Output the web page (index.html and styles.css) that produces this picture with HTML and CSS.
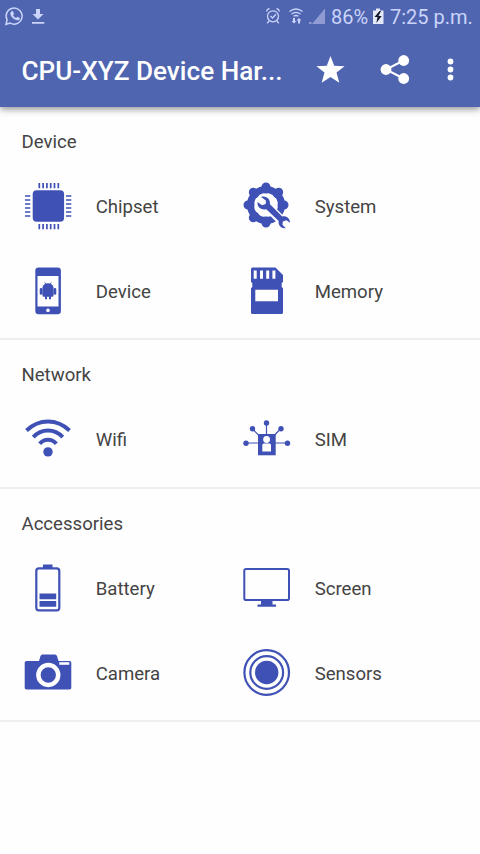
FILE: index.html
```html
<!DOCTYPE html>
<html lang="en">
<head>
<meta charset="utf-8">
<title>CPU-XYZ Device Hardware</title>
<link rel="stylesheet" href="styles.css">
</head>
<body>
<header class="top">
  <div class="status">
    <svg class="status-left" width="60" height="32" viewBox="0 0 60 32">
      <path d="M6 24.300L7.100 20A8 8 0 1 1 10.200 23.100Z" fill="none" stroke="currentColor" stroke-width="1.500"/>
      <path d="M11 11.500l1.800-.4 1.300 2.800-1 1.300c.7 1.300 1.700 2.200 3 2.700l1.200-1.200 2.600 1.300c0 1.800-1.300 2.500-2.700 2.300-3.800-.7-7-4.200-6.900-7z" fill="currentColor"/>
      <path d="M36 9h4v5h3.500L38 19.500 32.500 14H36zM32 22h12.300v1.700H32z" fill="currentColor"/>
    </svg>
    <svg class="status-mid" width="64" height="32" viewBox="264 0 64 32">
      <g fill="none" stroke="currentColor" stroke-width="1.300">
        <circle cx="273" cy="16.300" r="5.500"/>
        <path d="M266.500 11.500q.5-2.500 3-3M279.500 11.500q-.5-2.500-3-3M269 21l-1.800 2.300M277 21l1.800 2.300M270.500 16l2 2 3.500-3.700"/>
        <path d="M289.500 11.500q6.500-5 13 0M291.500 14q4.500-3.300 9 0M293.600 16.300q2.400-1.600 4.800 0"/>
      </g>
      <path d="M293 18h2v3h1.500l-2.500 2.500-2.500-2.500h1.500zM298 23.500h2v-3h1.500L299 18l-2.500 2.500h1.500z" fill="currentColor"/>
      <path d="M325 8.500V24h-13zM309 22h2.500v2H309z" fill="#8f9bd2"/>
    </svg>
    <span class="percent">86%</span>
    <svg class="charge" width="12" height="32" viewBox="372 0 12 32">
      <path d="M373 10.500h3V8.500h4v2h3.500V24H373z" fill="#e4e8fb"/>
      <path d="M379.500 11l-5 6h3l-1.200 6 5.400-7h-3.200l2.500-5z" fill="#151a2a"/>
    </svg>
    <span class="clock">7:25 p.m.</span>
  </div>
  <div class="bar">
    <h1 class="title">CPU-XYZ Device Har...</h1>
    <svg class="actions" width="164" height="40" viewBox="316 50 164 40" fill="#fff">
      <path d="M330.500 56l3.700 9.700 10.400.5-8.100 6.400 2.800 10.200-8.800-5.700-8.800 5.700 2.800-10.200-8.100-6.400 10.400-.5z"/>
      <path d="M403.500 60.500L386 69.500l17.500 9" fill="none" stroke="#fff" stroke-width="2"/>
      <circle cx="403.700" cy="60.500" r="5.400"/><circle cx="386" cy="69.500" r="5.400"/><circle cx="403.700" cy="78.500" r="5.400"/>
      <circle cx="450.500" cy="61.500" r="2.900"/><circle cx="450.500" cy="69.500" r="2.900"/><circle cx="450.500" cy="77.500" r="2.900"/>
    </svg>
  </div>
</header>
<main>
  <section class="section">
    <h2 class="heading">Device</h2>
    <div class="grid">
      <div class="item">
        <svg class="icon" viewBox="0 0 48 48">
          <rect x="8.700" y="8.300" width="31.400" height="31.400" rx="4"/>
          <path d="M15.300 1v5.300M19.100 1v5.300M22.900 1v5.300M26.700 1v5.300M30.500 1v5.300M34.300 1v5.300M15.300 42v5.300M19.100 42v5.300M22.900 42v5.300M26.700 42v5.300M30.500 42v5.300M34.300 42v5.300M1 14h5.300M1 18h5.300M1 22h5.300M1 26h5.300M1 30h5.300M1 34h5.300M42 14h5.300M42 18h5.300M42 22h5.300M42 26h5.300M42 30h5.300M42 34h5.300" stroke="currentColor" stroke-width="1.700"/>
        </svg>
        <span>Chipset</span>
      </div>
      <div class="item">
        <svg class="icon" viewBox="0 0 48 48">
          <circle cx="23" cy="23" r="15.500" fill="none" stroke="currentColor" stroke-width="7"/>
          <g stroke="currentColor" stroke-width="9" stroke-linecap="round">
            <path d="M23 5v2M23 39v2M5 23h2M39 23h2M10.300 10.300l1.400 1.400M10.300 35.700l1.400-1.400M34.300 11.700l1.400-1.400"/>
          </g>
          <path d="M24 24L40 40" stroke="#fefefe" stroke-width="9.500"/>
          <path d="M38 35l9 3v10h-9l-4-7z" fill="#fefefe"/>
          <path d="M18 15c4.500-1.500 9.500 1.500 9 7.200L39.200 34.400c4-.8 8 1.800 7.700 6.300l-3.500-2.500-3.500 1.300-.5 3.200 3.500 3.600c-4.800.6-8-3-7.200-7.200L23.300 27.200c-5.500 1.200-9.500-2.500-8.700-7.200l4.400 3.300 3.700-1.300.2-3.600z"/>
        </svg>
        <span>System</span>
      </div>
      <div class="item">
        <svg class="icon" viewBox="0 0 48 48">
          <rect x="11.300" y=".5" width="25.600" height="46.800" rx="3.300"/>
          <path d="M13.500 9h21v30.500h-21z" fill="#fefefe"/>
          <circle cx="24" cy="43.400" r="1.800" fill="#fefefe"/>
          <path d="M18.500 20.500a5.500 4.300 0 0 1 11 0zM18.500 20.300h11v8.400q0 1-1 1H27v2.500h-2v-2.500h-2v2.500h-2v-2.500h-1.500q-1 0-1-1zM17 21q1.300 0 1.300 1.300v4.500q0 1-1.300 1-1.300 0-1.300-1v-4.500q0-1.300 1.300-1.300zM31 21q1.300 0 1.300 1.300v4.500q0 1-1.300 1-1.300 0-1.300-1v-4.500q0-1.300 1.300-1.300z"/>
          <path d="M20.500 15.300l1.700 2M27.500 15.300l-1.700 2" stroke="currentColor" stroke-width=".8"/>
        </svg>
        <span>Device</span>
      </div>
      <div class="item">
        <svg class="icon" viewBox="0 0 48 48">
          <path d="M9.500.5H32.500L40 8v7l-1.300 1v4l1.300 1.300V45.500q0 1.500-1.500 1.500h-29Q8 47 8 45.500V21.300L9.300 20v-4L8 15V2Q8 .5 9.500.5z"/>
          <path d="M10.700 3.500h3v8.300h-3zM17 3.500h3v8.300h-3zM23.200 3.500h3v8.300h-3zM29.400 3.500h3v8.300h-3zM12.300 22.700h22.700v11.500H12.300z" fill="#fefefe"/>
        </svg>
        <span>Memory</span>
      </div>
    </div>
  </section>
  <section class="section">
    <h2 class="heading">Network</h2>
    <div class="grid">
      <div class="item">
        <svg class="icon" viewBox="0 0 48 48">
          <path d="M2.500 15.500Q12 6.500 24 6.500T45.500 15.500M9.300 22.200Q15.500 15.600 24 15.600T38.700 22.200M15.700 28.800Q19 24.800 24 24.800T32.300 28.800" fill="none" stroke="currentColor" stroke-width="4"/>
          <circle cx="24" cy="36.900" r="4.700"/>
        </svg>
        <span>Wifi</span>
      </div>
      <div class="item">
        <svg class="icon" viewBox="0 0 48 48">
          <path d="M3 28h42M23.500 8v12M9.500 14l8 8M37.500 14l-8 8" stroke="currentColor" stroke-width="1.200"/>
          <circle cx="3" cy="28.200" r="2.700"/><circle cx="9.500" cy="13.800" r="2.700"/><circle cx="23.500" cy="8" r="2.700"/><circle cx="38" cy="13.800" r="2.700"/><circle cx="44.500" cy="28.200" r="2.700"/>
          <path d="M15 19h17.700v21.300H15z"/>
          <circle cx="23.600" cy="24.500" r="3.400" fill="#fefefe"/>
          <path d="M19.300 30q0-1.500 1.500-1.500h5.700q1.500 0 1.500 1.500v6.500h-8.700z" fill="#fefefe"/>
        </svg>
        <span>SIM</span>
      </div>
    </div>
  </section>
  <section class="section">
    <h2 class="heading">Accessories</h2>
    <div class="grid">
      <div class="item">
        <svg class="icon" viewBox="0 0 48 48">
          <rect x="12.300" y="4.300" width="23" height="42" rx="2.600" fill="none" stroke="currentColor" stroke-width="2.200"/>
          <path d="M19 .5h9.500V4H19zM15.500 29.500h16.700v5.800H15.500zM15.500 37h16.700v5.800H15.500z"/>
        </svg>
        <span>Battery</span>
      </div>
      <div class="item">
        <svg class="icon" viewBox="0 0 48 48">
          <rect x="1.300" y="5" width="44.700" height="31" rx="1.800" fill="none" stroke="currentColor" stroke-width="2"/>
          <path d="M18 36h11.500v4.500H33v2.200H14.500v-2.200H18z"/>
        </svg>
        <span>Screen</span>
      </div>
      <div class="item">
        <svg class="icon" viewBox="0 0 48 48">
          <path d="M2.500 12H15l1.500-5q.5-1.500 2-1.500H31q1.500 0 2 1.500l1.500 5h11q1.800 0 1.800 1.800v24.900q0 1.800-1.800 1.800h-43Q.7 40.500.7 38.700V13.800Q.7 12 2.500 12z"/>
          <path d="M35.300 13.200h10v2.600h-10z" fill="#fefefe"/>
          <circle cx="24.300" cy="26" r="9.900" stroke="#fefefe" stroke-width="4.500"/>
        </svg>
        <span>Camera</span>
      </div>
      <div class="item">
        <svg class="icon" viewBox="0 0 48 48">
          <circle cx="23.700" cy="23.500" r="11.700"/>
          <g fill="none" stroke="currentColor" stroke-width="2.200"><circle cx="23.700" cy="23.500" r="16.400"/><circle cx="23.700" cy="23.500" r="22.300"/></g>
        </svg>
        <span>Sensors</span>
      </div>
    </div>
  </section>
</main>
</body>
</html>
```
FILE: styles.css
```css
* { box-sizing: border-box; }
body {
  margin: 0;
  min-height: 854px;
  background: #fefefe;
  color: #444;
  font-family: Roboto, "Liberation Sans", sans-serif;
}
svg { display: block; flex: none; }
.top {
  position: relative;
  height: 106.500px;
  background: #5065b0;
  box-shadow: 0 2px 7px rgba(0, 0, 0, .45);
}
.status {
  display: flex;
  height: 32px;
  color: #cbd4fa;
  font-size: 20px;
  line-height: 34px;
  white-space: nowrap;
}
.status-mid { margin-left: 204px; }
.percent { width: 44px; padding-left: 3px; }
.charge { color: #fff; }
.clock { padding-left: 6px; }
.bar {
  display: flex;
  align-items: center;
  height: 76px;
  padding-left: 21.500px;
}
.title {
  width: 294.500px;
  margin: 0;
  padding-top: 2px;
  color: #fff;
  font-size: 26.150px;
  font-weight: 500;
  white-space: nowrap;
}
.section {
  padding-bottom: 4.500px;
  border-bottom: 2px solid #efefef;
}
.heading {
  height: 56.500px;
  margin: 0;
  padding: 24px 0 0 21.500px;
  font-size: 18.600px;
  font-weight: 400;
  line-height: 22px;
}
.grid {
  display: grid;
  grid-template-columns: 219px 1fr;
  grid-auto-rows: 85.400px;
  padding-left: 24px;
}
.item {
  display: flex;
  align-items: center;
  gap: 24px;
  font-size: 18.600px;
}
.item span {
  padding-top: 2px;
  margin-left: -.3px;
}
.icon {
  width: 48px;
  height: 48px;
  color: #3f51b5;
  fill: currentColor;
}
```
